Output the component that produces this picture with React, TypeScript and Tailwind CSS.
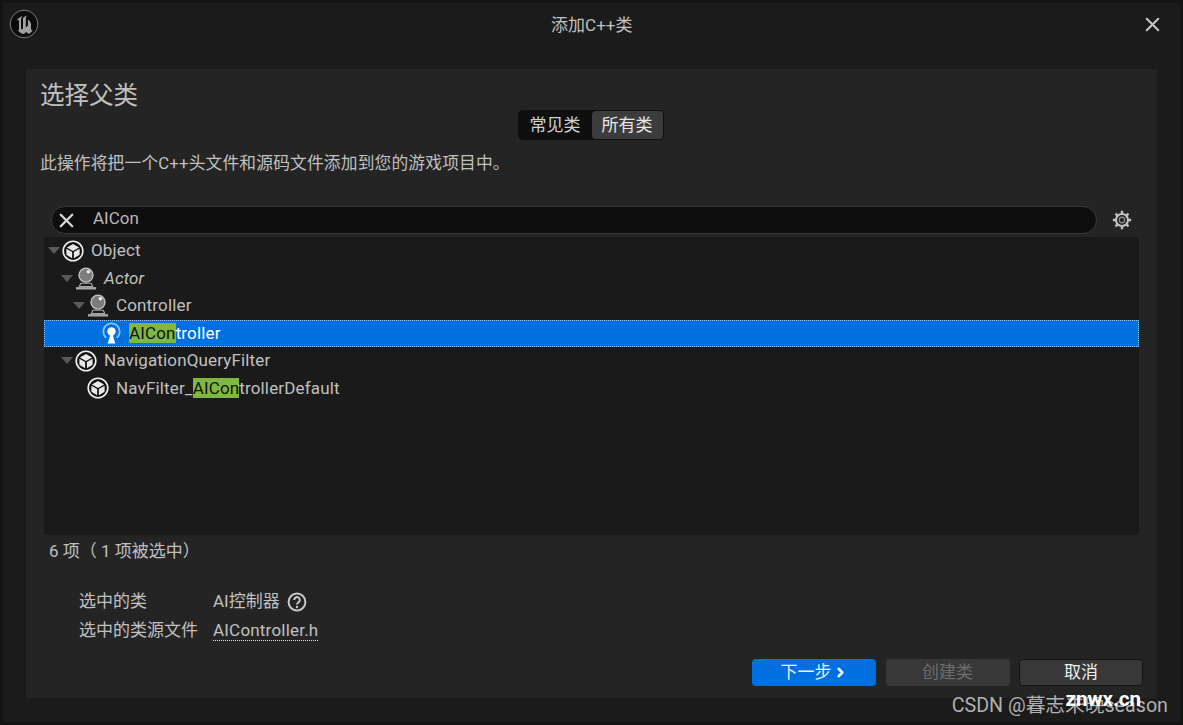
import type { ReactNode } from "react";
import { X, ChevronRight } from "lucide-react";

const font = "[font-family:Roboto,'Noto_Sans_CJK_SC',sans-serif]";

type Kind = "object" | "actor" | "ai";

type Row = {
  depth: number;
  kind: Kind;
  before?: string;
  match?: string;
  text: string;
  italic?: boolean;
  arrow?: boolean;
  selected?: boolean;
};

const rows: Row[] = [
  { depth: 0, kind: "object", text: "Object", arrow: true },
  { depth: 1, kind: "actor", text: "Actor", italic: true, arrow: true },
  { depth: 2, kind: "actor", text: "Controller", arrow: true },
  { depth: 3, kind: "ai", match: "AICon", text: "troller", selected: true },
  { depth: 1, kind: "object", text: "NavigationQueryFilter", arrow: true },
  { depth: 2, kind: "object", before: "NavFilter_", match: "AICon", text: "trollerDefault" },
];

const indents = ["pl-[3px]", "pl-[16px]", "pl-[28px]", "pl-[40px]"];

const UnrealLogo = () => (
  <svg width="30" height="30" viewBox="0 0 30 30">
    <circle cx="15" cy="15" r="13.8" fill="#0b0b0b" stroke="#7c7c7c" strokeWidth="1" />
    <path
      d="M7.5 11.5C9 9.5 11 8 13.5 7 12.5 8.5 12 9.5 12 11v8.5c0 1 1 1 2 .3V9c1-1 2.5-2 4-2.4C17 8 16.8 9 16.8 10v8.5l2.2-1.9v-6.1c1.5 1 2.5 2.5 3 4.5v5c0 1 1 1.5 2 1-1 1.500-2.500 3-4.500 4l-2-2-3 2c-2.500-.5-4.500-2-5.500-4 1 .2 1-.5 1-1.500V12c0-1-1-1.200-2.500-.5z"
      fill="#a0a0a0"
    />
  </svg>
);

const ObjectIcon = () => (
  <svg width="22" height="22" viewBox="0 0 20 20" fill="none">
    <circle cx="10" cy="10" r="8.9" fill="#111" stroke="#f0f0f0" strokeWidth="1.5" />
    <path d="M10 3.6 15.6 6.800 10 10 4.400 6.800z" fill="#e8e8e8" />
    <path d="M4 8 9.200 11v5.600L4 13.500z" fill="#e8e8e8" />
    <path d="M16 8 10.800 11v5.600L16 13.500z" fill="#e8e8e8" />
  </svg>
);

const ActorIcon = () => (
  <svg width="23" height="25" viewBox="0 0 23 25" fill="none">
    <circle cx="11.500" cy="9" r="8" fill="#c4c4c4" />
    <circle cx="11.500" cy="9" r="6.600" fill="#7c7c7c" />
    <circle cx="14" cy="5.500" r="1.800" fill="#f0f0f0" />
    <path d="M6 17.500h11l1.500 3.500h-14z" fill="#1a1a1a" stroke="#a6a6a6" strokeWidth="1.200" />
    <rect x="1" y="21.500" width="21" height="2.500" fill="#a6a6a6" />
  </svg>
);

const AiIcon = () => (
  <svg width="19" height="22" viewBox="0 0 19 22" fill="none">
    <path d="M4.200 15.800a8.200 8.200 0 1 1 10.600 0" stroke="#8cc8ff" strokeWidth="1.800" />
    <circle cx="9.500" cy="9.500" r="4.200" fill="#fff" />
    <path d="M8.500 12h2l2.800 9.500H5.700z" fill="#fff" />
  </svg>
);

const icons = { object: <ObjectIcon />, actor: <ActorIcon />, ai: <AiIcon /> };

const TreeRow = ({ row }: { row: Row }) => (
  <div
    className={`flex h-[27.500px] items-center ${indents[row.depth]} ${
      row.selected
        ? "border border-dotted border-[#9cc8f5] bg-[#0070e0] text-white"
        : "text-[#c0c0c0]"
    }`}
  >
    <div className="flex w-[13px] shrink-0 justify-center">
      {row.arrow && (
        <div className="h-0 w-0 border-x-[6px] border-t-[7px] border-x-transparent border-t-[#5a5a5a]" />
      )}
    </div>
    <div className="ml-[2px] flex w-[22px] shrink-0 justify-center">{icons[row.kind]}</div>
    <div
      className={`ml-[7px] pt-[0.5px] text-[17px] tracking-[0.15px] ${row.italic ? "italic" : ""}`}
    >
      {row.before}
      {row.match && <span className="bg-[#80b83f] text-[#111]">{row.match}</span>}
      {row.text}
    </div>
  </div>
);

const Button = ({ className, children }: { className: string; children: ReactNode }) => (
  <div
    className={`flex h-[27px] w-[124px] items-center justify-center rounded-[4px] text-[17px] ${className}`}
  >
    {children}
  </div>
);

export default function App() {
  return (
    <div
      className={`relative h-[725px] w-[1183px] overflow-hidden border-[3px] border-[#141414] bg-[#1b1b1b] text-[#c0c0c0] ${font}`}
    >
      <div className="flex h-[66px] items-start justify-between pl-[6px] pr-[15.500px] pt-[6px]">
        <UnrealLogo />
        <div className="ml-[3px] pt-[4px] text-[17px] text-[#c0c0c0]">添加C++类</div>
        <X size={23} strokeWidth={2.200} className="mt-[4px] text-[#c4c4c4]" />
      </div>

      <div className="mx-[23px] flex h-[629px] flex-col bg-[#242424] px-[18px]">
        <div className="-ml-[4px] h-[41px] pt-[9px] text-[24.500px] leading-[36px] text-[#c0c0c0]">
          选择父类
        </div>
        <div className="flex justify-center">
          <div className="-ml-[2px] flex h-[30px] w-[146px] items-center rounded-[5px] bg-[#0f0f0f] p-[1px] text-[17px]">
            <div className="flex h-full flex-1 items-center justify-center pt-[1px] text-[#d0d0d0]">常见类</div>
            <div className="flex h-full w-[71px] items-center justify-center rounded-[4px] bg-[#3c3c3c] pt-[1px] text-[#e6e6e6]">
              所有类
            </div>
          </div>
        </div>
        <div className="-ml-[4px] mt-[11px] text-[16.750px] leading-[24px] tracking-[0.15px]">
          此操作将把一个C++头文件和源码文件添加到您的游戏项目中。
        </div>

        <div className="mt-[31px] flex h-[28px] items-center">
          <div className="ml-[7px] flex h-full w-[1046px] items-center rounded-full border border-[#383838] bg-[#0e0e0e] pl-[3px]">
            <X size={23} strokeWidth={2.400} className="text-[#d8d8d8]" />
            <span className="-mt-[2px] ml-[15px] text-[17px] text-[#b8b8b8]">AICon</span>
          </div>
          <svg width="22" height="22" viewBox="0 0 24 24" className="ml-[14px] text-[#c4c4c4]" fill="none">
            <circle cx="12" cy="12" r="6.600" stroke="currentColor" strokeWidth="2.200" />
            <circle cx="12" cy="12" r="3" stroke="#8a8a8a" strokeWidth="1.400" />
            <path
              d="M12 2v3.500M12 18.500V22M2 12h3.500M18.500 12H22M4.900 4.900l2.500 2.500M16.600 16.600l2.500 2.500M4.900 19.100l2.500-2.500M16.600 7.400l2.500-2.500"
              stroke="currentColor"
              strokeWidth="2.600"
            />
          </svg>
        </div>

        <div className="mt-[3px] h-[298px] w-[1095px] bg-[#1a1a1a]">
          {rows.map((row) => (
            <TreeRow key={row.before + row.text} row={row} />
          ))}
        </div>

        <div className="-ml-[13px] mt-[4px] pl-[18px] text-[17px] leading-[24px]">
          6 项（ 1 项被选中）
        </div>

        <div className="ml-[35px] mt-[24px] flex flex-col text-[17px]">
          <div className="flex h-[29px] items-center">
            <div className="w-[134px]">选中的类</div>
            <span>AI控制器</span>
            <svg width="20" height="20" viewBox="0 0 20 20" className="ml-[7px]" fill="none">
              <circle cx="10" cy="10" r="8.400" stroke="#c8c8c8" strokeWidth="2" />
              <path
                d="M7.200 8a2.800 2.800 0 1 1 4.400 2.200c-1 .7-1.600 1.100-1.600 2.200"
                stroke="#c8c8c8"
                strokeWidth="2"
              />
              <circle cx="10" cy="15" r="1.200" fill="#c8c8c8" />
            </svg>
          </div>
          <div className="flex h-[29px] items-center">
            <div className="w-[134px]">选中的类源文件</div>
            <span className="border-b border-dotted border-[#e0e0e0] leading-[19px] tracking-[0.2px]">
              AIController.h
            </span>
          </div>
        </div>

        <div className="-mr-[4px] mt-[14px] flex justify-end gap-[9.500px]">
          <Button className="bg-[#0070e0] text-[#f0f0f0]">
            下一步
            <ChevronRight size={15} strokeWidth={4} className="ml-[1px]" />
          </Button>
          <Button className="bg-[#383838] text-[#6c6c6c]">创建类</Button>
          <Button className="border border-[#141414] bg-[#383838] text-[#f0f0f0]">取消</Button>
        </div>
      </div>

      <div className="absolute right-[12px] top-[690px] text-[19.700px] leading-[26px] text-[#b0b0b0]">
        CSDN @暮志未晚season
      </div>
      <div className="absolute right-[39px] top-[683px] text-[20.500px] font-bold leading-[26px] text-white">
        znwx.cn
      </div>
    </div>
  );
}
